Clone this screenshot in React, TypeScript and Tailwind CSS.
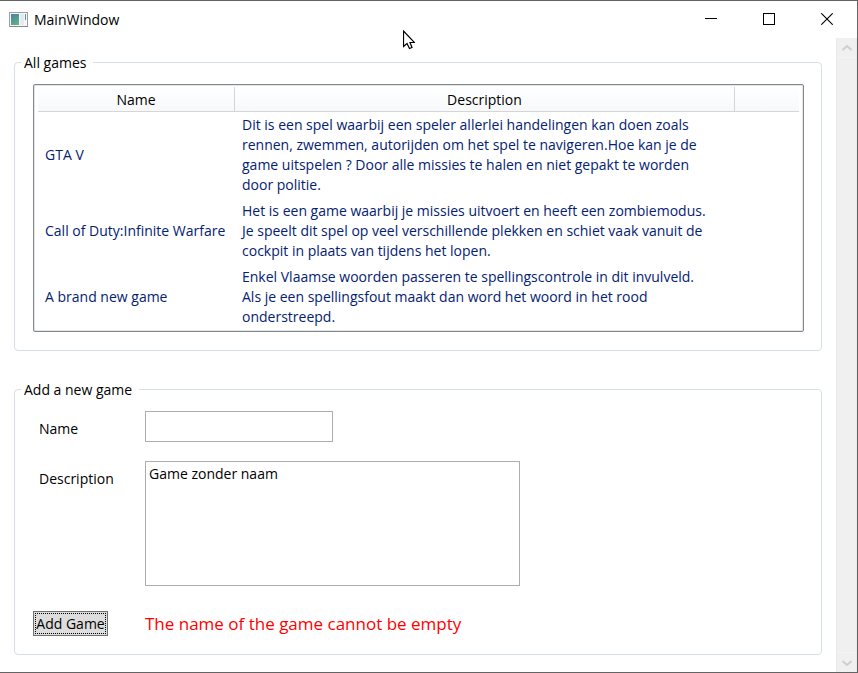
import { useState } from "react";
import type { ReactNode } from "react";

type Game = { name: string; description: string[] };

const games: Game[] = [
  {
    name: "GTA V",
    description: [
      "Dit is een spel waarbij een speler allerlei handelingen kan doen zoals",
      "rennen, zwemmen, autorijden om het spel te navigeren.Hoe kan je de",
      "game uitspelen ? Door alle missies te halen en niet gepakt te worden",
      "door politie.",
    ],
  },
  {
    name: "Call of Duty:Infinite Warfare",
    description: [
      "Het is een game waarbij je missies uitvoert en heeft een zombiemodus.",
      "Je speelt dit spel op veel verschillende plekken en schiet vaak vanuit de",
      "cockpit in plaats van tijdens het lopen.",
    ],
  },
  {
    name: "A brand new game",
    description: [
      "Enkel Vlaamse woorden passeren te spellingscontrole in dit invulveld.",
      "Als je een spellingsfout maakt dan word het woord in het rood",
      "onderstreepd.",
    ],
  },
];

function TitleBar() {
  const button = "flex h-[35px] w-[58px] items-center justify-center";
  return (
    <header className="flex h-[37px] items-center justify-between">
      <div className="flex items-center gap-[6px] pl-[9px]">
        <svg width="19" height="16" viewBox="0 0 19 16" aria-hidden="true">
          <defs>
            <linearGradient id="pane" x1="0" y1="0" x2="0.5" y2="1">
              <stop offset="0" stopColor="#4a7fa5" />
              <stop offset="1" stopColor="#5fae86" />
            </linearGradient>
          </defs>
          <rect x="0.5" y="0.5" width="18" height="14" fill="#f4f6f8" stroke="#9b9fa4" />
          <rect x="1" y="14" width="18" height="1" fill="#85898e" />
          <rect x="2" y="2" width="8" height="11" fill="url(#pane)" />
          <rect x="11" y="2" width="4" height="11" fill="#e6e9ee" />
          <rect x="16" y="2" width="1" height="6" fill="#5b9c8e" />
        </svg>
        <h1>MainWindow</h1>
      </div>
      <div className="flex self-start pr-px">
        <button type="button" aria-label="Minimize" className={button}>
          <svg width="12" height="12" shapeRendering="crispEdges">
            <path d="M0 5.500H12" stroke="#000" />
          </svg>
        </button>
        <button type="button" aria-label="Maximize" className={button}>
          <svg width="12" height="12" shapeRendering="crispEdges">
            <rect x="0.5" y="0.5" width="11" height="11" fill="none" stroke="#000" />
          </svg>
        </button>
        <button type="button" aria-label="Close" className={button}>
          <svg width="12" height="12">
            <path d="M0.300 0.300L11.700 11.700M11.700 0.300L0.300 11.700" stroke="#000" strokeWidth="1.100" />
          </svg>
        </button>
      </div>
    </header>
  );
}

function GroupBox({ title, children }: { title: string; children: ReactNode }) {
  return (
    <fieldset className="rounded border border-[#d5dfe5] pr-[17px] pl-[18px]">
      <legend className="-ml-3 h-[19px] pr-[7px] pl-[3px]">{title}</legend>
      {children}
    </fieldset>
  );
}

function GamesTable() {
  const head = "border-b border-[#d5d5d5] px-0 pt-[2px] pb-0 font-normal";
  return (
    <div className="rounded-xs border border-[#828790] px-1 pt-[2px] pb-px shadow-[inset_0_0_0_1px_#e3e5e8]">
      <table className="w-full table-fixed border-separate border-spacing-0">
        <thead>
          <tr className="h-[25px] bg-linear-to-b from-white to-[#f7f8fa]">
            <th className={`${head} w-[197px] border-r`}>Name</th>
            <th className={`${head} w-[500px] border-r`}>Description</th>
            <th className={head} aria-label="Spacer" />
          </tr>
        </thead>
        <tbody className="text-[#042271]">
          {games.map((game) => (
            <tr key={game.name}>
              <td className="py-[3px] pl-[7px] whitespace-nowrap">{game.name}</td>
              <td className="py-[3px] pl-[7px] whitespace-nowrap">
                {game.description.map((line) => (
                  <span key={line} className="block">{line}</span>
                ))}
              </td>
              <td />
            </tr>
          ))}
        </tbody>
      </table>
    </div>
  );
}

function AddGameForm() {
  const [name, setName] = useState("");
  const [description, setDescription] = useState("Game zonder naam");
  const field = "block border border-[#abadb3] bg-white px-[3px] outline-none";
  return (
    <form className="pt-3 pb-[18px]" onSubmit={(e) => e.preventDefault()}>
      <div className="flex items-start">
        <label htmlFor="name" className="w-[112px] pt-2 pl-[6px]">Name</label>
        <input
          id="name"
          value={name}
          onChange={(e) => setName(e.target.value)}
          className={`${field} h-[31px] w-[188px]`}
        />
      </div>
      <div className="mt-[19px] flex items-start">
        <label htmlFor="description" className="w-[112px] pt-2 pl-[6px]">Description</label>
        <textarea
          id="description"
          value={description}
          onChange={(e) => setDescription(e.target.value)}
          className={`${field} h-[125px] w-[375px] resize-none pt-[2px]`}
        />
      </div>
      <div className="mt-[25px] flex items-center">
        <div className="w-[112px]">
          <button type="submit" className="flex h-[25px] w-[75px] border border-[#707070] bg-[#dddddd] p-px">
            <span className="flex flex-1 items-center justify-center border border-dotted border-black whitespace-nowrap">
              Add Game
            </span>
          </button>
        </div>
        <p role="alert" className="text-[17px] text-[#ff0000]">The name of the game cannot be empty</p>
      </div>
    </form>
  );
}

function ScrollBar() {
  const arrow = "flex h-5 w-full items-center justify-center border-[#f4f4f4]";
  return (
    <div className="flex w-[21px] shrink-0 flex-col justify-between border-x border-[#eaeaea] bg-[#f0f0f0]">
      <button type="button" aria-label="Scroll up" className={`${arrow} border-b`}>
        <svg width="10" height="8" viewBox="0 0 10 8" fill="none">
          <path d="M0.500 6L5 2L9.500 6" stroke="#cfcfcf" strokeWidth="2" />
        </svg>
      </button>
      <button type="button" aria-label="Scroll down" className={`${arrow} border-t`}>
        <svg width="10" height="8" viewBox="0 0 10 8" fill="none">
          <path d="M0.500 2L5 6L9.500 2" stroke="#cfcfcf" strokeWidth="2" />
        </svg>
      </button>
    </div>
  );
}

export default function App() {
  return (
    <div className="relative flex min-h-screen flex-col border-t border-r border-b border-[#646464] bg-white font-['Open_Sans','Noto_Sans',sans-serif] text-[14px] leading-5 text-black">
      <TitleBar />
      <div className="flex flex-1">
        <main className="flex min-w-0 flex-1 flex-col gap-[29px] px-[14px] pt-[15px]">
          <GroupBox title="All games">
            <div className="pt-3 pb-[18px]">
              <GamesTable />
            </div>
          </GroupBox>
          <GroupBox title="Add a new game">
            <AddGameForm />
          </GroupBox>
        </main>
        <ScrollBar />
      </div>
      <svg className="pointer-events-none absolute top-[29px] left-[403px]" width="12" height="20" viewBox="0 0 12 20" aria-hidden="true">
        <path d="M0.500 1V16.500L4 13.500L6.500 18.500L9 17.500L7 12.500H11.500Z" fill="#fff" stroke="#000" strokeWidth="1.200" />
      </svg>
    </div>
  );
}
